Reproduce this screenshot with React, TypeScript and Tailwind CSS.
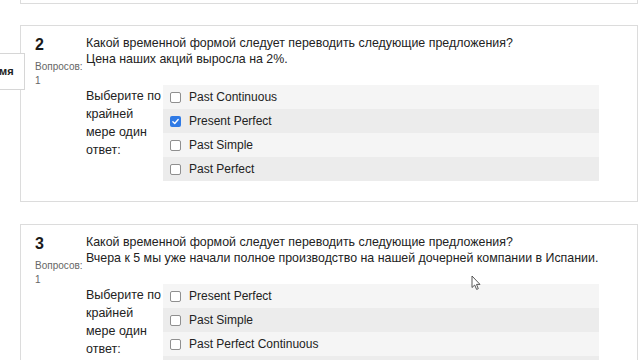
import React from "react";

type Question = {
  num: number;
  lines: string[];
  options: { label: string; checked?: boolean }[];
};

const questions: Question[] = [
  {
    num: 2,
    lines: ["Какой временной формой следует переводить следующие предложения?", "Цена наших акций выросла на 2%."],
    options: [
      { label: "Past Continuous" },
      { label: "Present Perfect", checked: true },
      { label: "Past Simple" },
      { label: "Past Perfect" },
    ],
  },
  {
    num: 3,
    lines: [
      "Какой временной формой следует переводить следующие предложения?",
      "Вчера к 5 мы уже начали полное производство на нашей дочерней компании в Испании.",
    ],
    options: [
      { label: "Present Perfect" },
      { label: "Past Simple" },
      { label: "Past Perfect Continuous" },
      { label: "Past Continuous" },
    ],
  },
];

const Checkbox: React.FC<{ checked?: boolean }> = ({ checked }) =>
  checked ? (
    <span className="flex h-[11px] w-[11px] items-center justify-center rounded-[2px] bg-[#2f7ae5]">
      <svg viewBox="0 0 12 12" className="h-[9px] w-[9px]">
        <path d="M2.5 6.2 L5 8.6 L9.6 3.4" fill="none" stroke="#fff" strokeWidth="1.8" strokeLinecap="round" strokeLinejoin="round" />
      </svg>
    </span>
  ) : (
    <span className="h-[11px] w-[11px] rounded-[2px] border border-[#8f8f8f] bg-white" />
  );

const QuestionCard: React.FC<{ q: Question }> = ({ q }) => (
  <div className="flex border border-[#dcdcdc] bg-white pl-[14px] pt-[9px] pb-[20px]">
    <div className="w-[51px] shrink-0">
      <div className="text-[16px] font-bold leading-[20px] text-[#1a1a1a]">{q.num}</div>
      <div className="mt-[5px] text-[10px] leading-[14px] text-[#666]">
        Вопросов:
        <br />1
      </div>
    </div>
    <div className="flex-1">
      <div className="text-[12.4px] leading-[16px] text-[#222]">
        {q.lines.map((l) => (
          <div key={l}>{l}</div>
        ))}
      </div>
      <div className="mt-[18px] flex">
        <div className="w-[77px] shrink-0 pt-[2px] text-[12.5px] leading-[18px] text-[#222]">
          Выберите по крайней мере один ответ:
        </div>
        <div className="w-[436px]">
          {q.options.map((o, i) => (
            <div
              key={o.label}
              className={`flex h-[24px] items-center gap-[8px] pl-[7px] text-[12px] text-[#222] ${
                i % 2 === 0 ? "bg-[#f5f5f5]" : "bg-[#ececec]"
              }`}
            >
              <Checkbox checked={o.checked} />
              <span>{o.label}</span>
            </div>
          ))}
        </div>
      </div>
    </div>
  </div>
);

export default function App() {
  return (
    <div className="relative h-[360px] w-[640px] overflow-hidden bg-white font-['Liberation_Sans',Arial,sans-serif]">
      <div className="flex flex-col gap-[22px] pl-[20px] pr-[2px]">
        <div className="-mb-[1px] h-[4px] border-x border-b border-[#dcdcdc]" />
        {questions.map((q) => (
          <QuestionCard key={q.num} q={q} />
        ))}
      </div>

      <div className="absolute left-0 top-[53px] flex h-[37px] w-[25px] items-center border border-l-0 border-[#d6d6d6] bg-white">
        <span className="-ml-[1px] text-[11px] font-bold text-[#222]">мя</span>
      </div>

      <svg className="absolute left-[471px] top-[275px]" width="10" height="16" viewBox="0 0 10 16">
        <path d="M1 1 L1 12.5 L3.7 10 L5.6 14.4 L7.3 13.7 L5.5 9.4 L9 9.4 Z" fill="#fff" stroke="#444" strokeWidth="0.9" strokeLinejoin="round" />
      </svg>
    </div>
  );
}
